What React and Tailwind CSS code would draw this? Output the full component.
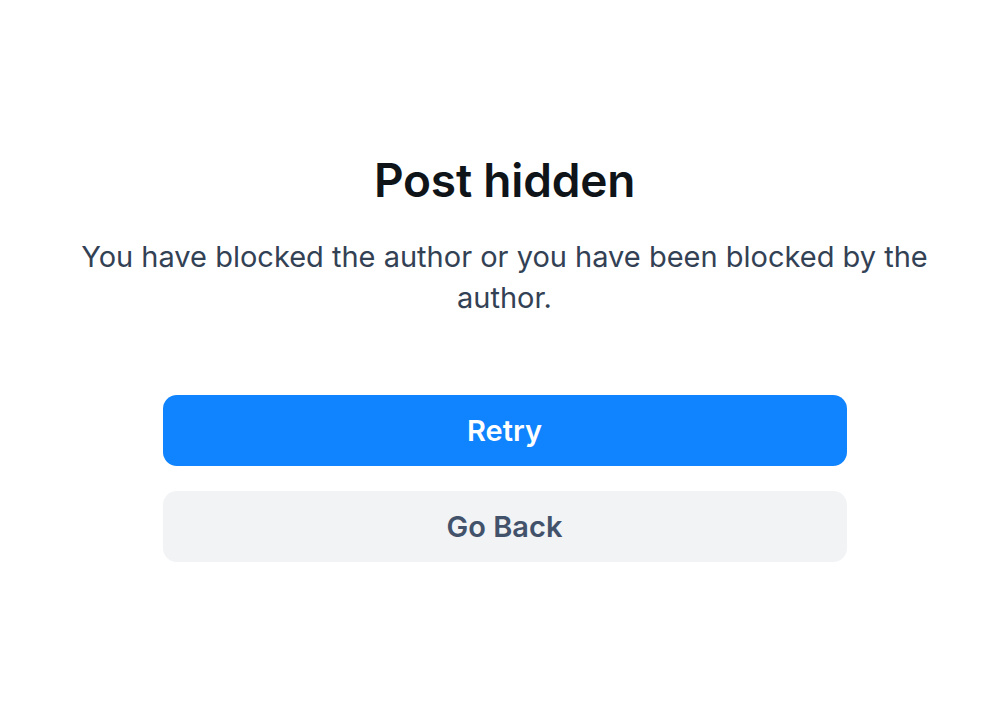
export default function App() {
  return (
    <div
      className="w-[1000px] h-[727px] bg-white flex flex-col items-center pl-[9px]"
      style={{ fontFamily: 'Inter, "Noto Sans", sans-serif' }}
    >
      <h1 className="mt-[152px] text-[46px] leading-[56px] font-semibold text-[#0f1419] tracking-[-0.2px]">
        Post hidden
      </h1>
      <p className="mt-[28px] px-[40px] text-center text-[29px] leading-[41px] text-[#334155]">
        You have blocked the author or you have been blocked by the author.
      </p>
      <div className="mt-[77px] w-[684px] flex flex-col gap-[25px]">
        <button className="h-[71px] rounded-[14px] bg-[#1083fe] text-white text-[29px] font-semibold">
          Retry
        </button>
        <button className="h-[71px] rounded-[14px] bg-[#f1f3f5] text-[#42526a] text-[29px] font-semibold">
          Go Back
        </button>
      </div>
    </div>
  );
}
